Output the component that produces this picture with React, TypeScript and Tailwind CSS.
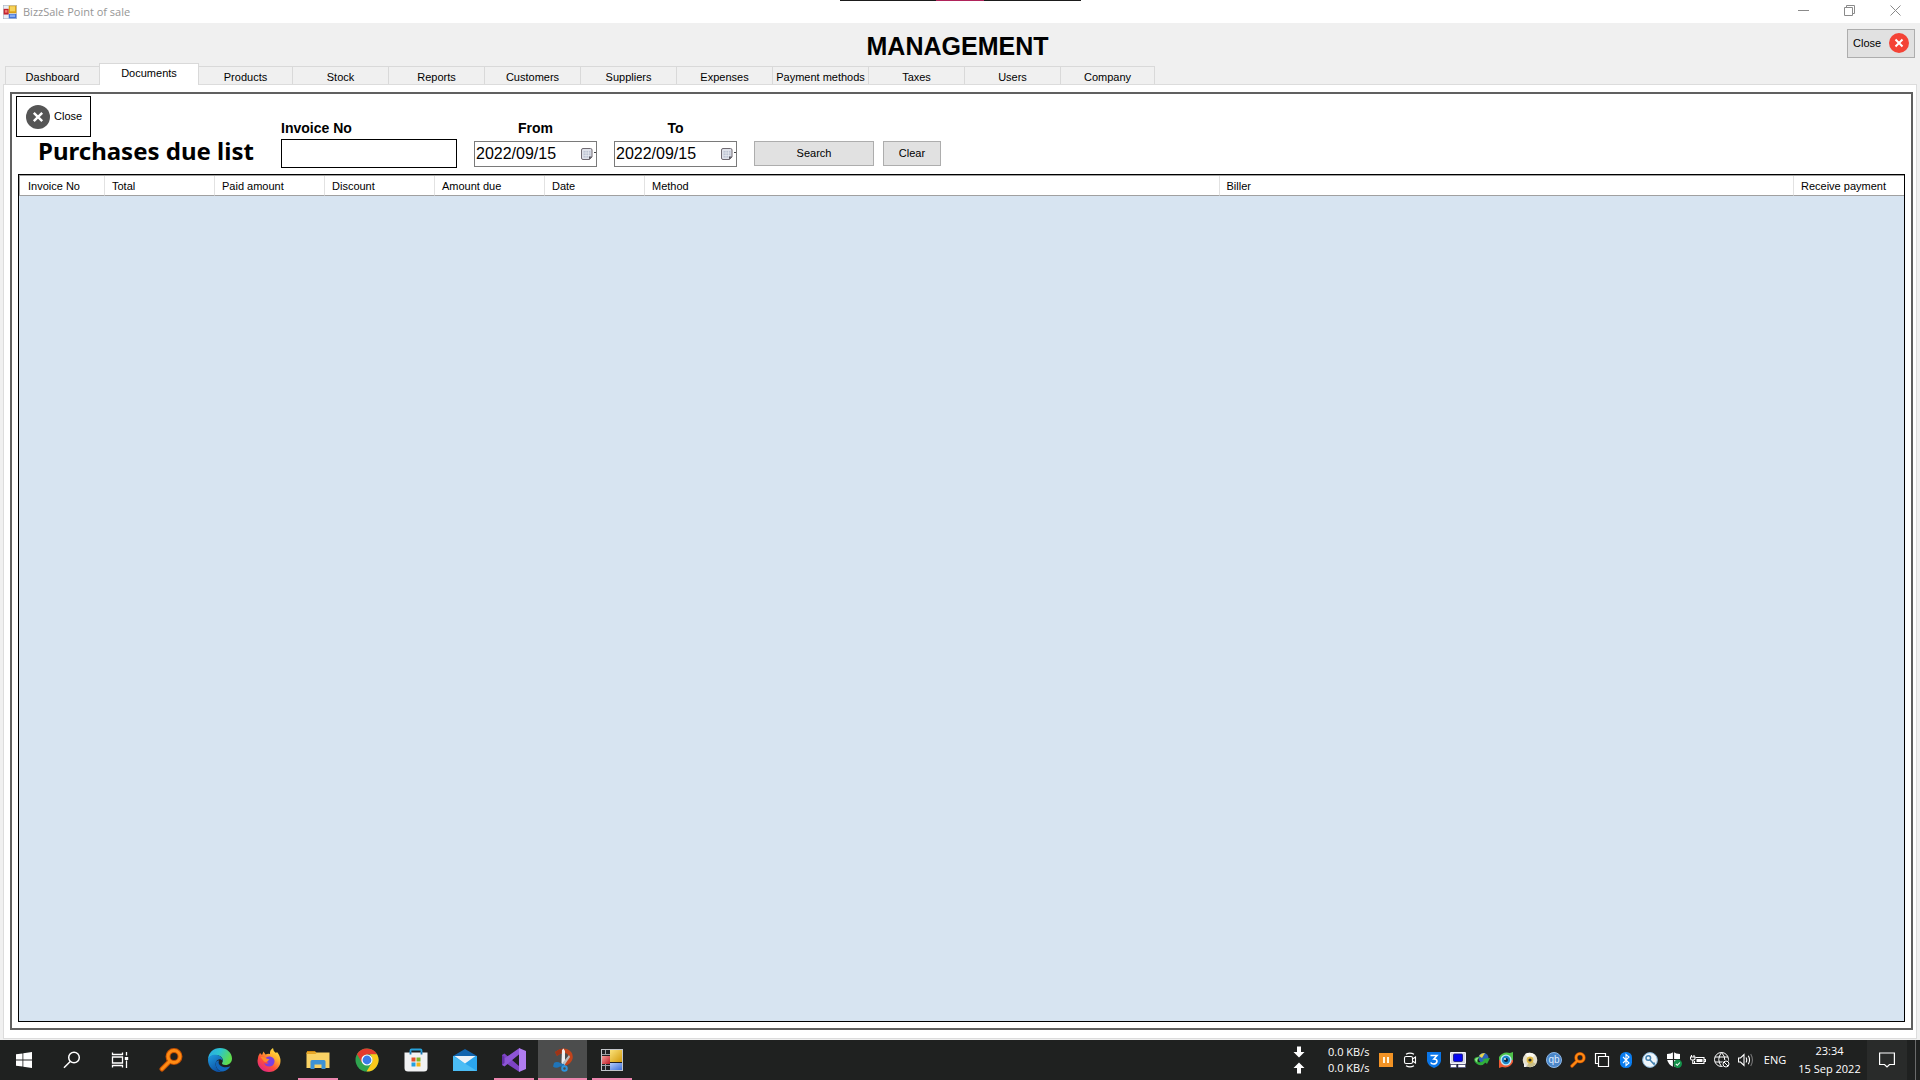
import React from "react";

const tabs = [
  "Dashboard",
  "Documents",
  "Products",
  "Stock",
  "Reports",
  "Customers",
  "Suppliers",
  "Expenses",
  "Payment methods",
  "Taxes",
  "Users",
  "Company",
];

const columns = [
  { name: "Invoice No", width: "w-[85px]" },
  { name: "Total", width: "w-[110px]" },
  { name: "Paid amount", width: "w-[110px]" },
  { name: "Discount", width: "w-[110px]" },
  { name: "Amount due", width: "w-[110px]" },
  { name: "Date", width: "w-[100px]" },
  { name: "Method", width: "" },
  { name: "Biller", width: "" },
  { name: "Receive payment", width: "w-[110px]" },
];

function FormIcon({ className }: { className: string }) {
  return (
    <svg viewBox="0 0 22 22" className={className} aria-hidden="true">
      <rect x="0.5" y="0.5" width="21" height="21" fill="#e9eef5" stroke="#a9b4c4" />
      <rect x="1" y="6" width="8" height="9" fill="#c4222c" />
      <rect x="3" y="8" width="4" height="4" fill="#ef7d78" />
      <rect x="9" y="1" width="12" height="12" fill="#d9a016" />
      <rect x="11" y="2" width="8" height="8" fill="#f6d45c" />
      <rect x="9" y="14" width="12" height="7" fill="#3f70d6" />
      <rect x="11" y="15" width="8" height="4" fill="#86abf2" />
    </svg>
  );
}

function FormTaskIcon() {
  return (
    <svg viewBox="0 0 22 22" className="size-[22px]" aria-hidden="true">
      <defs>
        <linearGradient id="formYellow" x1="0" y1="0" x2="1" y2="1">
          <stop offset="0" stopColor="#fbe27a" />
          <stop offset="1" stopColor="#d39a0c" />
        </linearGradient>
        <linearGradient id="formRed" x1="0" y1="0" x2="1" y2="1">
          <stop offset="0" stopColor="#f59a98" />
          <stop offset="1" stopColor="#c01c26" />
        </linearGradient>
        <linearGradient id="formBlue" x1="0" y1="0" x2="1" y2="1">
          <stop offset="0" stopColor="#b5ccfa" />
          <stop offset="1" stopColor="#3d6fd8" />
        </linearGradient>
      </defs>
      <rect x="0.5" y="0.5" width="21" height="21" fill="#202124" stroke="#c3c6cb" />
      <path d="M1 5.500H9M4.500 1V6M1 16.500H9M4.500 15V21" stroke="#a0a3a8" />
      <rect x="1" y="7" width="8" height="8" fill="url(#formRed)" />
      <rect x="9" y="1" width="12" height="12" fill="url(#formYellow)" />
      <rect x="9" y="14" width="12" height="7" fill="url(#formBlue)" />
    </svg>
  );
}

function RoundCross({ className, fill }: { className: string; fill: string }) {
  return (
    <svg viewBox="0 0 24 24" className={className} aria-hidden="true">
      <circle cx="12" cy="12" r="12" fill={fill} />
      <path d="M7.8 7.8L16.2 16.2M16.2 7.8L7.8 16.2" stroke="#fff" strokeWidth="2.4" />
    </svg>
  );
}

function DateField({ id, label }: { id: string; label: string }) {
  return (
    <div className="flex w-[123px] flex-col">
      <label htmlFor={id} className="text-center text-[14px] leading-[22px] font-bold">
        {label}
      </label>
      <div className="flex h-[29px] items-center">
        <div className="flex h-[26px] w-full items-center border border-[#7a7a7a] bg-white">
          <input
            id={id}
            type="text"
            defaultValue="2022/09/15"
            className="h-full w-full min-w-0 bg-transparent pl-px text-[16px] outline-none"
          />
          <button type="button" aria-label={`Open calendar for ${label}`} className="shrink-0">
            <svg viewBox="0 0 15 14" className="h-[14px] w-[15px]" aria-hidden="true">
              <path d="M2 1.500H9.500Q11 1.500 11 3V10L8.500 12.500H2Q0.500 12.500 0.500 11V3Q0.500 1.500 2 1.500Z" fill="#dfe2ea" stroke="#706b72" />
              <path d="M2.500 4H9.500V9L8 10.500H2.500Z" fill="#bcc3d2" />
              <path d="M2.500 6H9.500M2.500 8.500H9.500M5 4V10.500M7.500 4V10.500" stroke="#eef0f5" strokeWidth="0.6" />
              <path d="M8 12.500V9.500H11Z" fill="#55525a" />
              <path d="M13 5H15V6H13Z" fill="#444" />
            </svg>
          </button>
        </div>
      </div>
    </div>
  );
}

function MagnifierOrange({ className }: { className: string }) {
  return (
    <svg viewBox="0 0 24 24" className={className} aria-hidden="true">
      <g fill="none" stroke="#c44f00" strokeWidth="5" strokeLinecap="round">
        <circle cx="15" cy="8.500" r="6" />
        <path d="M10 14L3 21" />
      </g>
      <g fill="none" stroke="#ff8c14" strokeWidth="3" strokeLinecap="round">
        <circle cx="15" cy="8.500" r="6" />
        <path d="M10 14L3 21" />
      </g>
    </svg>
  );
}

const WindowsLogo = () => (
  <svg viewBox="0 0 16 16" className="size-4" fill="#fff">
    <path d="M0 2.300L6.500 1.400V7.600H0ZM7.300 1.300L16 0V7.600H7.300ZM0 8.400H6.500V14.600L0 13.700ZM7.300 8.400H16V16L7.300 14.700Z" />
  </svg>
);

const SearchGlyph = () => (
  <svg viewBox="0 0 18 18" className="size-[18px]" fill="none" stroke="#fff" strokeWidth="1.500">
    <circle cx="11" cy="6.500" r="5.300" />
    <path d="M7.200 10.500L1 16.800" />
  </svg>
);

const TaskView = () => (
  <svg viewBox="0 0 18 18" className="size-[18px]" fill="none" stroke="#fff" strokeWidth="1.300">
    <path d="M1.500 1.500V3.500H11.500V1.500M1.500 16.500V14.500H11.500V16.500M1.500 6H11.500V12H1.500ZM15.500 1V4.500M15.500 9.500V17" />
    <path d="M13.800 6H17.200V9H13.800Z" fill="#fff" stroke="none" />
  </svg>
);

const Edge = () => (
  <svg viewBox="0 0 24 24" className="size-6">
    <defs>
      <linearGradient id="edgeTop" x1="0" y1="0" x2="1" y2="0.400">
        <stop offset="0" stopColor="#2aa6e8" />
        <stop offset="0.500" stopColor="#2cc4cf" />
        <stop offset="1" stopColor="#5fdc4e" />
      </linearGradient>
      <linearGradient id="edgeLow" x1="0" y1="0" x2="0.600" y2="1">
        <stop offset="0" stopColor="#1f9de0" />
        <stop offset="1" stopColor="#0c4fa3" />
      </linearGradient>
    </defs>
    <path d="M0 11C0.600 4.500 5.500 0 12 0C19 0 24 5 24 10.500C24 14.500 21 17 17.500 17C14.500 17 13.500 15.700 14.200 14.800C16 12.500 14.500 8.500 10.500 7.500C6 6.500 1.500 8 0 11Z" fill="url(#edgeTop)" />
    <path d="M0 12C0 8.500 4 6.500 8 6.800C12 7.200 15 10 14.600 13.200C13.500 10.500 9.500 10.500 8 14C6.500 18.500 10 23 14.500 23.700C6.500 25.500 0 19.500 0 12Z" fill="url(#edgeLow)" />
    <path d="M8 14C6.500 18.500 10.500 23.500 15 23.600C18.500 22.700 21 20.500 22.300 18.200C19.500 19.600 15.500 19.700 13 18C11 16.700 10 15 11 12.500C9.500 12.500 8.500 13 8 14Z" fill="#1267bb" />
  </svg>
);

const Firefox = () => (
  <svg viewBox="0 0 24 24" className="size-6">
    <defs>
      <linearGradient id="fox" x1="0.900" y1="0" x2="0.200" y2="1">
        <stop offset="0" stopColor="#fff04a" />
        <stop offset="0.350" stopColor="#ffb02e" />
        <stop offset="0.650" stopColor="#ff4f3a" />
        <stop offset="1" stopColor="#e0208c" />
      </linearGradient>
    </defs>
    <path d="M3 5L5 7L6.500 3.500L8.500 6.500Q11 5.500 13 6Q12.500 2 16 0Q16 3 19 5L20 4Q23.500 8 23.500 13C23.500 19 18.500 24 12 24C5.500 24 0.500 19 0.500 12.700Q0.500 8 3 5Z" fill="url(#fox)" />
    <path d="M7.500 12Q9 8 13 8.500Q18 9.500 17.500 14Q16.500 18.500 12 18.500Q8.500 18.500 7 15Q9.500 16.500 12 15Q9 14.500 10.500 13Q12 12.500 7.500 12Z" fill="#7a3fe0" />
    <path d="M3.500 9Q7 8 9.500 10.500L12.500 11.500L10.500 13.300Q9 14.500 7 13.500Z" fill="#ff8a2b" />
  </svg>
);

const Explorer = () => (
  <svg viewBox="0 0 24 20" className="h-5 w-6">
    <path d="M1 1H9L10.500 3H1Z" fill="#d18a10" />
    <path d="M0.500 2.500H23.500V18H0.500Z" fill="#f9d265" />
    <path d="M0.500 2.500H9L10.500 4H0.500Z" fill="#e5a422" />
    <path d="M4.500 19V11.500Q4.500 10 6 10H18Q19.500 10 19.500 11.500V19H15.500V14.500H8.500V19Z" fill="#3d92d6" />
  </svg>
);

const Chrome = () => (
  <svg viewBox="0 0 24 24" className="size-6">
    <circle cx="12" cy="12" r="11.500" fill="#2fa44f" />
    <path d="M2 6.200A11.500 11.500 0 0 1 22 6.300L12 6.500Q9 7 7.200 9.500L7.200 15Z" fill="#e33b2e" />
    <path d="M22 6.300A11.500 11.500 0 0 1 11.500 23.500L17 14.500Q18.500 10 15 6.300Z" fill="#fbc91b" />
    <circle cx="12" cy="12" r="5.600" fill="#fff" />
    <circle cx="12" cy="12" r="4.400" fill="#3a7ce8" />
  </svg>
);

const Store = () => (
  <svg viewBox="0 0 24 24" className="size-6">
    <path d="M6.500 6V2.500Q6.500 1.500 7.500 1.500H16.500Q17.500 1.500 17.500 2.500V6" fill="none" stroke="#28a3dc" strokeWidth="1.800" />
    <path d="M0.500 4.500H23.500V20Q23.500 23.500 20 23.500H4Q0.500 23.500 0.500 20Z" fill="#f1f2f3" />
    <path d="M6.500 4V6.500M17.500 4V6.500" stroke="#1b78b5" strokeWidth="1.800" />
    <path d="M7.500 9.500H11.500V13.500H7.500Z" fill="#e2502b" />
    <path d="M12.500 9.500H16.500V13.500H12.500Z" fill="#7fb524" />
    <path d="M7.500 14.500H11.500V18.500H7.500Z" fill="#25a0df" />
    <path d="M12.500 14.500H16.500V18.500H12.500Z" fill="#f2b415" />
  </svg>
);

const Mail = () => (
  <svg viewBox="0 0 24 24" className="size-6">
    <path d="M0 8L12 1L24 8V12H0Z" fill="#1264ad" />
    <path d="M0 8H24V23H0Z" fill="#2ba6ee" />
    <path d="M0 8L24 23H0Z" fill="#4bbdf5" />
    <path d="M1.500 8H22.500L12 15.500Z" fill="#eef2f6" />
  </svg>
);

const VisualStudio = () => (
  <svg viewBox="0 0 24 24" className="size-6">
    <path d="M0 7L2.500 5.500L17.500 18.500V24L16 23L3 14.500L0 17Z" fill="#7d43c4" />
    <path d="M0 17L2.500 18.500L17.500 6V0L16 1L3 10L0 7Z" fill="#8d55d6" />
    <path d="M0 7L2.500 9V15L0 17Z" fill="#6330a6" />
    <path d="M17 0L24 3V21L17 24Z" fill="#b07cf0" />
  </svg>
);

const Snip = () => (
  <svg viewBox="0 0 24 24" className="size-6">
    <path d="M4 4Q10-1 16 1Q23 4 21.500 11Q20 16 14 18L13 13Q17 12 17.500 9Q17.500 5 13 5Q9 5 6 8Z" fill="#c2441c" />
    <path d="M4 4Q8 0.500 12 0.500V5Q9 5 6 8Z" fill="#9c3417" />
    <path d="M11 2L12.500 0.500L14 3V17L12 18L10.500 15Z" fill="#eef0f2" />
    <path d="M18 7L19 9L13.500 17L11.500 15Z" fill="#b9bfc3" />
    <path d="M3 15Q6 13 10 15.500L13.500 16L13 18.500L9 18.500Q5 21 2 18.500Z" fill="#1f74b8" />
    <circle cx="13.500" cy="20.500" r="2.300" fill="none" stroke="#2b93dc" strokeWidth="2" />
  </svg>
);

const pinned = [
  { name: "Everything", icon: <MagnifierOrange className="size-6" />, open: false, active: false },
  { name: "Edge", icon: <Edge />, open: false, active: false },
  { name: "Firefox", icon: <Firefox />, open: false, active: false },
  { name: "File Explorer", icon: <Explorer />, open: true, active: false },
  { name: "Chrome", icon: <Chrome />, open: false, active: false },
  { name: "Store", icon: <Store />, open: false, active: false },
  { name: "Mail", icon: <Mail />, open: false, active: false },
  { name: "Visual Studio", icon: <VisualStudio />, open: true, active: false },
  { name: "Snipping Tool", icon: <Snip />, open: true, active: true },
  { name: "BizzSale", icon: <FormTaskIcon />, open: true, active: false },
];

const tray = [
  {
    name: "Pause",
    icon: (
      <svg viewBox="0 0 16 16" className="size-4">
        <path d="M1 1H15V15H1Z" fill="#f39324" />
        <path d="M5 5H7V11H5ZM9 5H11V11H9Z" fill="#fff6dc" />
      </svg>
    ),
  },
  {
    name: "Meet Now",
    icon: (
      <svg viewBox="0 0 16 16" className="size-4" fill="none" stroke="#fff" strokeWidth="1.100">
        <path d="M4 2.200Q8 0 12 2.200M4 13.800Q8 16 12 13.800M4 4.500H9Q10.500 4.500 10.500 6V10Q10.500 11.500 9 11.500H4Q2.500 11.500 2.500 10V6Q2.500 4.500 4 4.500ZM10.500 7L13.500 5V11L10.500 9" />
      </svg>
    ),
  },
  {
    name: "Shield",
    icon: (
      <svg viewBox="0 0 16 16" className="size-4">
        <path d="M1 0H15V9Q14 14 8 16Q2 14 1 9Z" fill="#0a76e8" />
        <path d="M4.500 3.500H11L7.800 7Q11.200 7 11 9.500Q10.500 12 7.500 12Q5.500 12 4.700 10.500" fill="none" stroke="#fff" strokeWidth="1.500" />
      </svg>
    ),
  },
  {
    name: "Remote computer",
    icon: (
      <svg viewBox="0 0 16 16" className="size-4">
        <path d="M0.500 0.500H15.500V11.500H0.500Z" fill="#1a1a78" stroke="#f2f2f8" />
        <path d="M1 1H15V11H1Z" fill="#d5d6e4" />
        <rect x="3.5" y="2" width="9" height="7.5" rx="1" fill="#0505f0" stroke="#14146e" strokeWidth="0.8" />
        <path d="M0.500 12.500H6.500V15.500H0.500ZM8 12.500H15.500V15.500H8Z" fill="#fff" stroke="#3a3c7a" strokeWidth="0.600" />
      </svg>
    ),
  },
  {
    name: "Download manager",
    icon: (
      <svg viewBox="0 0 16 16" className="size-4">
        <circle cx="9.500" cy="6" r="5" fill="#2d62b8" />
        <path d="M5 4Q7 1 11 1L8 6Z" fill="#e8d34a" />
        <path d="M0 7Q2 4 6 5Q3 7 4 10Q8 11 10 8L8 7L16 6L13 12L11.500 10.500Q8 15 3 12Q0 10 0 7Z" fill="#2fae3b" />
        <path d="M1 7Q3 5 5 5.500Q2 8 3.500 10.500Q1 9.500 1 7Z" fill="#9be089" />
      </svg>
    ),
  },
  {
    name: "Eye guard",
    icon: (
      <svg viewBox="0 0 16 16" className="size-4">
        <path d="M1 5Q5-1 12 1L15 0V8H1Z" fill="#4fc24a" />
        <path d="M15 10Q12 17 4 15L1 16V8H15Z" fill="#ef5a33" />
        <circle cx="8" cy="8" r="5.600" fill="#bdeafa" />
        <circle cx="8" cy="8" r="4.200" fill="#1c86c8" />
        <circle cx="8" cy="8" r="2" fill="#10233a" />
        <circle cx="7" cy="7" r="0.900" fill="#fff" />
      </svg>
    ),
  },
  {
    name: "Disc",
    icon: (
      <svg viewBox="0 0 16 16" className="size-4">
        <circle cx="8" cy="8" r="7.300" fill="#e5e0cd" />
        <path d="M8 8L3 2Q8-1 13 3Z" fill="#fbfaf3" />
        <path d="M8 8L14 12Q9 17 5 14Z" fill="#c9bf8b" />
        <circle cx="8" cy="8" r="3.400" fill="#e0bb45" />
        <circle cx="8" cy="8" r="1.600" fill="#2c2a25" />
        <path d="M2 10L5 15H2Z" fill="#efefef" />
      </svg>
    ),
  },
  {
    name: "qBittorrent",
    icon: (
      <span className="flex size-4 items-center justify-center rounded-full border border-[#8db7e6] bg-[#4a86c9] font-['Liberation_Sans',sans-serif] text-[10px] leading-none text-[#dceaff]">
        qb
      </span>
    ),
  },
  { name: "Everything", icon: <MagnifierOrange className="size-4" /> },
  {
    name: "Windows",
    icon: (
      <svg viewBox="0 0 16 16" className="size-4" fill="none" stroke="#fff" strokeWidth="1.200">
        <path d="M4.500 4.500H14.500V14.500H4.500ZM4.500 11.500H1.500V1.500H11.500V4.500" />
      </svg>
    ),
  },
  {
    name: "Bluetooth",
    icon: (
      <svg viewBox="0 0 16 16" className="size-4">
        <rect x="2" y="0" width="12" height="16" rx="5.500" fill="#0a7df0" />
        <path d="M5 5L11 11L8 13.500V2.500L11 5L5 11" fill="none" stroke="#fff" strokeWidth="1.100" />
      </svg>
    ),
  },
  {
    name: "Key",
    icon: (
      <svg viewBox="0 0 16 16" className="size-4">
        <circle cx="8" cy="8" r="7.400" fill="#eef5fa" stroke="#7fb0d4" />
        <circle cx="6.300" cy="6" r="2.300" fill="none" stroke="#3f7fae" strokeWidth="1.500" />
        <path d="M7.800 7.800L12 12.300L12.500 10.500" fill="none" stroke="#3f7fae" strokeWidth="1.500" />
      </svg>
    ),
  },
  {
    name: "Security",
    icon: (
      <svg viewBox="0 0 16 16" className="size-4">
        <path d="M7.500 0Q10 2 14 2V7Q13.500 12 7.500 15Q1.500 12 1 7V2Q5 2 7.500 0Z" fill="#fff" />
        <path d="M7.500 0V15M1 7.500H14" stroke="#1f2120" strokeWidth="1.200" />
        <circle cx="11.800" cy="11.800" r="4.200" fill="#14924a" />
        <path d="M9.800 11.800L11.300 13.300L13.900 10.500" fill="none" stroke="#fff" strokeWidth="1.100" />
      </svg>
    ),
  },
  {
    name: "Battery",
    icon: (
      <svg viewBox="0 0 16 16" className="size-4" fill="none" stroke="#fff" strokeWidth="1.100">
        <path d="M5.500 5.500H14V11.500H4.500V9M14.500 7.500H15.500V9.500H14.500" />
        <path d="M6.500 7H12.500V10H6.500Z" fill="#fff" stroke="none" />
        <path d="M1.500 3V5M4 3V5M0.500 5H5V6.500Q5 8 2.750 8Q0.500 8 0.500 6.500ZM2.750 8V11.500H4.500" />
      </svg>
    ),
  },
  {
    name: "Network offline",
    icon: (
      <svg viewBox="0 0 16 16" className="size-4" fill="none" stroke="#fff">
        <circle cx="7.500" cy="7.500" r="7" />
        <path d="M1 5H14M1 10H9M7.500 0.500Q2 7.500 7.500 14.500M7.500 0.500Q11 4 10.800 8" />
        <circle cx="12" cy="12" r="4" fill="#1f2120" stroke="none" />
        <circle cx="12" cy="12" r="3" />
        <path d="M10 10L14 14" />
      </svg>
    ),
  },
  {
    name: "Volume",
    icon: (
      <svg viewBox="0 0 16 16" className="size-4" fill="none" stroke="#fff" strokeWidth="1.100">
        <path d="M0.500 6H2.500L6 2.500V13.500L2.500 10H0.500ZM8 5.500Q9.500 8 8 10.500M10.300 3.800Q12.800 8 10.300 12.200" />
        <path d="M12.700 2Q16.200 8 12.700 14" stroke="#777" />
      </svg>
    ),
  },
];

export default function App() {
  return (
    <div className="flex min-h-screen flex-col bg-[#f0f0f0] font-['Liberation_Sans',sans-serif] text-[11px] text-black">
      <div className="absolute top-0 left-1/2 flex h-px w-[241px] -translate-x-[120px] bg-[#1b1b1b]">
        <div className="ml-24 w-12 bg-[#b0235a]" />
      </div>

      <header className="flex h-[23px] items-center bg-white pr-0.5 pl-[3px] font-['Open_Sans',sans-serif]">
        <FormIcon className="size-[14px]" />
        <span className="ml-1.5 text-[11px] leading-4 text-[#969696]">BizzSale Point of sale</span>
        <div className="ml-auto flex pb-0.5">
          <button type="button" aria-label="Minimize" className="flex w-[46px] justify-center">
            <svg viewBox="0 0 11 11" className="size-[11px]" stroke="#8a8a8a">
              <path d="M0 5.500H11" />
            </svg>
          </button>
          <button type="button" aria-label="Restore" className="flex w-[46px] justify-center">
            <svg viewBox="0 0 11 11" className="size-[11px]" fill="none" stroke="#8a8a8a">
              <path d="M0.500 2.500H8.500V10.500H0.500ZM2.500 2.500V0.500H10.500V8.500H8.500" />
            </svg>
          </button>
          <button type="button" aria-label="Close window" className="flex w-[46px] justify-center">
            <svg viewBox="0 0 11 11" className="size-[11px]" fill="none" stroke="#8a8a8a">
              <path d="M0.500 0.500L10.500 10.500M10.500 0.500L0.500 10.500" />
            </svg>
          </button>
        </div>
      </header>

      <div className="grid h-10 grid-cols-[1fr_auto_1fr] items-center pr-[5px]">
        <h1 className="col-start-2 pt-1.5 text-[25px] leading-8 font-bold">MANAGEMENT</h1>
        <button
          type="button"
          className="flex h-[29px] w-[68px] items-center justify-between justify-self-end border border-[#adadad] bg-[#e1e1e1] px-[5px]"
        >
          Close
          <RoundCross className="size-5" fill="#f44336" />
        </button>
      </div>

      <nav className="flex items-end pl-[5px]" role="tablist">
        {tabs.map((tab) =>
          tab === "Documents" ? (
            <button
              key={tab}
              type="button"
              role="tab"
              aria-selected="true"
              className="z-10 -mb-px h-[22px] w-[100px] border border-b-0 border-[#d9d9d9] bg-white pb-0.5"
            >
              {tab}
            </button>
          ) : (
            <button
              key={tab}
              type="button"
              role="tab"
              aria-selected="false"
              className="h-[18px] w-24 border-t border-r border-[#d9d9d9] pt-0.5 whitespace-nowrap first:w-[94px] first:border-r-0 first:border-l [&:nth-child(3)]:w-[94px] last:w-[94px]"
            >
              {tab}
            </button>
          ),
        )}
      </nav>

      <main className="mr-[3px] mb-px ml-[3px] flex flex-1 flex-col border border-[#dcdcdc] bg-white pt-[7px] pr-[3px] pb-2 pl-1.5">
        <section className="flex flex-1 flex-col border-2 border-[#606060] px-1 pt-0.5 pb-1.5">
          <div className="mb-1.5 flex items-end">
            <div className="w-[265px] pb-[3px]">
              <button
                type="button"
                className="flex h-[41px] w-[75px] items-center gap-1 border border-black bg-white pl-[9px]"
              >
                <RoundCross className="size-6" fill="#555555" />
                Close
              </button>
              <h2 className="pl-[22px] font-['Noto_Sans',sans-serif] text-[24px] leading-7 font-bold whitespace-nowrap">
                Purchases due list
              </h2>
            </div>
            <form className="flex items-end gap-[17px]">
              <div className="flex w-44 flex-col">
                <label htmlFor="invoice" className="text-[14px] leading-[22px] font-bold">
                  Invoice No
                </label>
                <input
                  id="invoice"
                  type="text"
                  className="h-[29px] border border-black bg-white px-1 text-[16px] outline-none"
                />
              </div>
              <DateField id="from" label="From" />
              <DateField id="to" label="To" />
              <div className="flex h-[29px] items-center gap-[9px]">
                <button type="button" className="h-[25px] w-[120px] border border-[#adadad] bg-[#e1e1e1]">
                  Search
                </button>
                <button type="button" className="h-[25px] w-[58px] border border-[#adadad] bg-[#e1e1e1]">
                  Clear
                </button>
              </div>
            </form>
          </div>

          <div className="mx-0.5 flex-1 border border-black bg-[#d7e4f1]">
            <table className="w-full table-fixed border-separate border-spacing-0 border-t border-l border-[#a0a0a0] bg-white">
              <thead>
                <tr>
                  {columns.map((column) => (
                    <th
                      key={column.name}
                      scope="col"
                      className={`h-5 border-r border-b border-r-[#e2e2e2] border-b-[#a0a0a0] p-0 pt-0.5 pl-[7px] text-left font-normal whitespace-nowrap first:pl-2 last:border-r-0 ${column.width}`}
                    >
                      {column.name}
                    </th>
                  ))}
                </tr>
              </thead>
            </table>
          </div>
        </section>
      </main>

      <footer className="flex h-10 items-stretch bg-[#1f2120] font-['Open_Sans',sans-serif] text-[11px] text-white">
        <button type="button" aria-label="Start" className="flex w-12 items-center justify-center">
          <WindowsLogo />
        </button>
        <button type="button" aria-label="Search" className="flex w-12 items-center justify-center">
          <SearchGlyph />
        </button>
        <button type="button" aria-label="Task view" className="mr-0.5 flex w-12 items-center justify-center">
          <TaskView />
        </button>
        {pinned.map((app) => (
          <button
            key={app.name}
            type="button"
            aria-label={app.name}
            className={`flex w-[49px] flex-col items-center ${app.active ? "bg-[#4c4d4d]" : ""}`}
          >
            <span className="flex flex-1 items-center">{app.icon}</span>
            <span
              className={`-mt-0.5 h-0.5 ${app.active ? "w-full" : "w-10"} ${app.open ? "bg-[#ec86ae]" : ""}`}
            />
          </button>
        ))}

        <div className="ml-auto flex items-center">
          <svg viewBox="0 0 12 28" className="mr-[23px] h-7 w-3" fill="#fff" aria-hidden="true">
            <path d="M4 0.500H8V6H11.500L6 11.500L0.500 6H4ZM4 27.500H8V22H11.500L6 16.500L0.500 22H4Z" />
          </svg>
          <div className="w-[46px] leading-4 whitespace-nowrap">
            <div>0.0 KB/s</div>
            <div>0.0 KB/s</div>
          </div>
          <div className="flex">
            {tray.map((item) => (
              <button
                key={item.name}
                type="button"
                aria-label={item.name}
                className="flex h-10 w-6 items-center justify-center"
              >
                {item.icon}
              </button>
            ))}
          </div>
          <button type="button" className="w-[34px]">
            ENG
          </button>
          <div className="w-[75px] text-center leading-[18px] whitespace-nowrap">
            <div>23:34</div>
            <div>15 Sep 2022</div>
          </div>
          <button
            type="button"
            aria-label="Notifications"
            className="flex h-10 w-10 items-center justify-center bg-[#292b2a]"
          >
            <svg viewBox="0 0 16 16" className="size-4" fill="none" stroke="#fff" strokeWidth="1.200">
              <path d="M0.600 1H15.400V12.500H10.500L8 15L5.500 12.500H0.600Z" />
            </svg>
          </button>
          <button
            type="button"
            aria-label="Show desktop"
            className="ml-2 h-10 w-[5px] border-l border-[#6a6b6b]"
          />
        </div>
      </footer>
    </div>
  );
}
